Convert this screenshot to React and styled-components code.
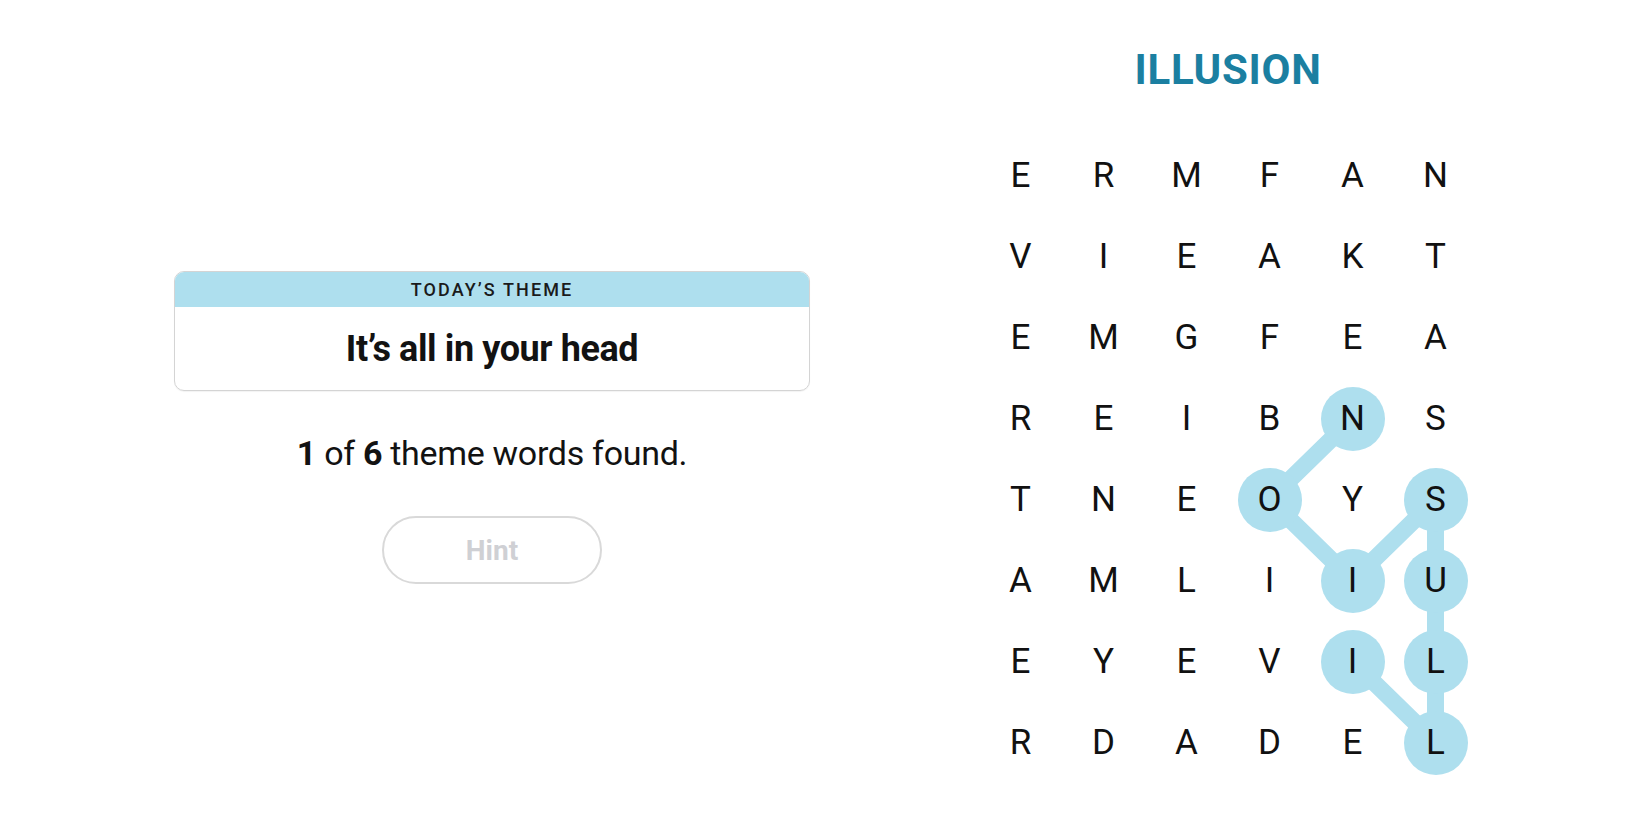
import React from "react";
import styled, { createGlobalStyle } from "styled-components";

const GlobalStyle = createGlobalStyle`
  html, body { margin: 0; padding: 0; background: #ffffff; }
  body { font-family: Roboto, "Liberation Sans", Arial, sans-serif; color: #121212; }
`;

const CELL_W = 83;
const CELL_H = 81;
const HIGHLIGHT = "#aedfee";

const Page = styled.div`
  display: flex;
  align-items: flex-start;
  width: 1650px;
  height: 825px;
  overflow: hidden;
`;

const LeftPanel = styled.section`
  display: flex;
  flex-direction: column;
  align-items: center;
  width: 636px;
  margin-left: 174px;
  margin-top: 271px;
`;

const ThemeCard = styled.div`
  box-sizing: border-box;
  width: 100%;
  height: 120px;
  display: flex;
  flex-direction: column;
  border: 1px solid #d4d4d4;
  border-radius: 10px;
  overflow: hidden;
  box-shadow: 0 1px 1px rgba(0, 0, 0, 0.05);
`;

const ThemeHeader = styled.div`
  height: 35px;
  display: flex;
  align-items: center;
  justify-content: center;
  background: ${HIGHLIGHT};
  font-size: 18px;
  font-weight: 500;
  letter-spacing: 2.1px;
  color: #1a1a1a;
`;

const ThemeBody = styled.div`
  flex: 1;
  display: flex;
  align-items: center;
  justify-content: center;
  font-size: 36px;
  font-weight: 700;
  letter-spacing: -0.4px;
  color: #121212;
`;

const Progress = styled.p`
  margin: 42px 0 0;
  line-height: 40px;
  font-size: 34px;
  font-weight: 400;
  letter-spacing: -0.3px;
  color: #121212;
  b { font-weight: 700; }
`;

const HintButton = styled.button`
  box-sizing: border-box;
  margin-top: 43px;
  width: 220px;
  height: 68px;
  border: 2px solid #d9d9d9;
  border-radius: 34px;
  background: #ffffff;
  font-family: Roboto, "Liberation Sans", Arial, sans-serif;
  font-size: 28px;
  font-weight: 700;
  color: #cfd0d4;
  cursor: default;
`;

const RightPanel = styled.section`
  display: flex;
  flex-direction: column;
  align-items: center;
  width: ${CELL_W * 6}px;
  margin-left: 169px;
  margin-top: 45px;
`;

const Title = styled.h1`
  margin: 0;
  height: 50px;
  line-height: 50px;
  font-size: 42px;
  font-weight: 700;
  letter-spacing: 0.7px;
  color: #1b7fa1;
`;

const Board = styled.div`
  position: relative;
  margin-top: 40px;
  display: grid;
  grid-template-columns: repeat(6, ${CELL_W}px);
  grid-auto-rows: ${CELL_H}px;
`;

const PathLayer = styled.svg`
  position: absolute;
  inset: 0;
  width: 100%;
  height: 100%;
  pointer-events: none;
`;

const Cell = styled.div`
  position: relative;
  display: flex;
  align-items: center;
  justify-content: center;
`;

const Letter = styled.span`
  width: 64px;
  height: 64px;
  border-radius: 50%;
  display: flex;
  align-items: center;
  justify-content: center;
  background: ${(p) => (p.$selected ? HIGHLIGHT : "transparent")};
  font-size: 35px;
  font-weight: 400;
  color: #111111;
`;

const rows = [
  "ERMFAN",
  "VIEAKT",
  "EMGFEA",
  "REIBNS",
  "TNEOYS",
  "AMLIIU",
  "EYEVIL",
  "RDADEL",
];

// ILLUSION path: [row, col]
const path = [
  [6, 4],
  [7, 5],
  [6, 5],
  [5, 5],
  [4, 5],
  [5, 4],
  [4, 3],
  [3, 4],
];

const selected = new Set(path.map(([r, c]) => `${r}-${c}`));

const center = ([r, c]) => [c * CELL_W + CELL_W / 2, r * CELL_H + CELL_H / 2];

export default function App() {
  const points = path.map((p) => center(p).join(",")).join(" ");
  return (
    <>
      <GlobalStyle />
      <Page>
        <LeftPanel>
          <ThemeCard>
            <ThemeHeader>TODAY’S THEME</ThemeHeader>
            <ThemeBody>It’s all in your head</ThemeBody>
          </ThemeCard>
          <Progress>
            <b>1</b> of <b>6</b> theme words found.
          </Progress>
          <HintButton type="button">Hint</HintButton>
        </LeftPanel>
        <RightPanel>
          <Title>ILLUSION</Title>
          <Board>
            <PathLayer viewBox={`0 0 ${CELL_W * 6} ${CELL_H * 8}`}>
              <polyline
                points={points}
                fill="none"
                stroke={HIGHLIGHT}
                strokeWidth="17"
                strokeLinejoin="round"
                strokeLinecap="round"
              />
            </PathLayer>
            {rows.map((row, r) =>
              row.split("").map((ch, c) => (
                <Cell key={`${r}-${c}`}>
                  <Letter $selected={selected.has(`${r}-${c}`)}>{ch}</Letter>
                </Cell>
              ))
            )}
          </Board>
        </RightPanel>
      </Page>
    </>
  );
}
